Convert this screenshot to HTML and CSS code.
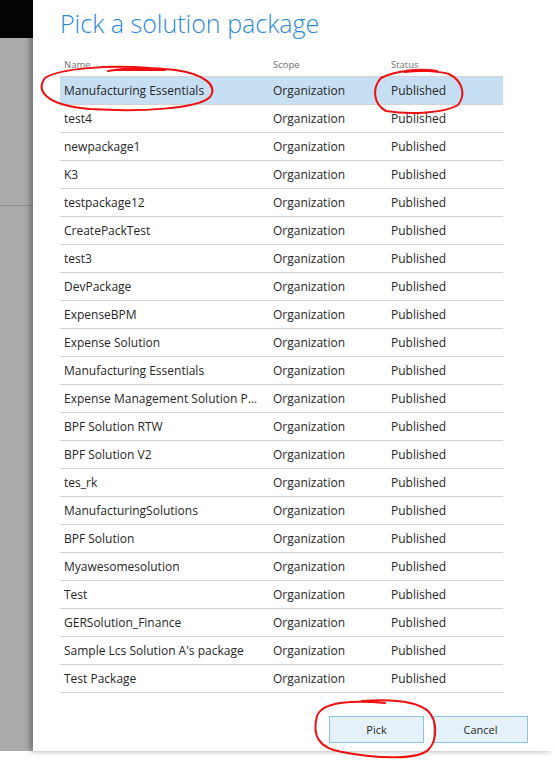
FILE: index.html
```html
<!DOCTYPE html>
<html>
<head>
<meta charset="utf-8">
<link rel="stylesheet" href="styles.css">
</head>
<body>
<div class="page">
  <div class="backdrop">
    <div class="backdrop-top"></div>
    <div class="backdrop-upper"></div>
    <div class="backdrop-lower"></div>
  </div>
  <div class="dialog">
    <h1 class="title">Pick a solution package</h1>
    <div class="table">
      <div class="row head"><div class="cell">Name</div><div class="cell">Scope</div><div class="cell">Status</div></div>
      <div class="row selected"><div class="cell">Manufacturing Essentials</div><div class="cell">Organization</div><div class="cell">Published</div></div>
      <div class="row"><div class="cell">test4</div><div class="cell">Organization</div><div class="cell">Published</div></div>
      <div class="row"><div class="cell">newpackage1</div><div class="cell">Organization</div><div class="cell">Published</div></div>
      <div class="row"><div class="cell">K3</div><div class="cell">Organization</div><div class="cell">Published</div></div>
      <div class="row"><div class="cell">testpackage12</div><div class="cell">Organization</div><div class="cell">Published</div></div>
      <div class="row"><div class="cell">CreatePackTest</div><div class="cell">Organization</div><div class="cell">Published</div></div>
      <div class="row"><div class="cell">test3</div><div class="cell">Organization</div><div class="cell">Published</div></div>
      <div class="row"><div class="cell">DevPackage</div><div class="cell">Organization</div><div class="cell">Published</div></div>
      <div class="row"><div class="cell">ExpenseBPM</div><div class="cell">Organization</div><div class="cell">Published</div></div>
      <div class="row"><div class="cell">Expense Solution</div><div class="cell">Organization</div><div class="cell">Published</div></div>
      <div class="row"><div class="cell">Manufacturing Essentials</div><div class="cell">Organization</div><div class="cell">Published</div></div>
      <div class="row"><div class="cell">Expense Management Solution Package</div><div class="cell">Organization</div><div class="cell">Published</div></div>
      <div class="row"><div class="cell">BPF Solution RTW</div><div class="cell">Organization</div><div class="cell">Published</div></div>
      <div class="row"><div class="cell">BPF Solution V2</div><div class="cell">Organization</div><div class="cell">Published</div></div>
      <div class="row"><div class="cell">tes_rk</div><div class="cell">Organization</div><div class="cell">Published</div></div>
      <div class="row"><div class="cell">ManufacturingSolutions</div><div class="cell">Organization</div><div class="cell">Published</div></div>
      <div class="row"><div class="cell">BPF Solution</div><div class="cell">Organization</div><div class="cell">Published</div></div>
      <div class="row"><div class="cell">Myawesomesolution</div><div class="cell">Organization</div><div class="cell">Published</div></div>
      <div class="row"><div class="cell">Test</div><div class="cell">Organization</div><div class="cell">Published</div></div>
      <div class="row"><div class="cell">GERSolution_Finance</div><div class="cell">Organization</div><div class="cell">Published</div></div>
      <div class="row"><div class="cell">Sample Lcs Solution A's package</div><div class="cell">Organization</div><div class="cell">Published</div></div>
      <div class="row"><div class="cell">Test Package</div><div class="cell">Organization</div><div class="cell">Published</div></div>
    </div>
    <div class="actions">
      <button class="btn">Pick</button>
      <button class="btn">Cancel</button>
    </div>
  </div>
  <svg class="marks" width="553" height="760" viewBox="0 0 553 760">
    <path d="M115 70 L165 70 M150 68 C110 65 60 68 45 78 C36 90 44 105 90 109 C140 112 198 109 210 97 C218 86 205 74 175 70 C150 67 125 68 108 71"/>
    <path d="M437 71 C418 68 395 71 381 78 C372 88 373 104 386 111 C410 115 445 113 458 105 C466 95 463 81 449 74 C438 71 420 70 405 72"/>
    <path d="M385 703 C352 700 322 702 317 716 C312 735 318 748 342 752 C378 759 420 760 429 749 C438 739 437 720 428 711 C415 700 390 699 362 701"/>
  </svg>
</div>
</body>
</html>
```
FILE: styles.css
```css
html, body {
  margin: 0;
  padding: 0;
  background: #ffffff;
}
.page {
  position: relative;
  width: 553px;
  height: 760px;
  display: flex;
  align-items: flex-start;
  overflow: hidden;
  font-family: "Open Sans", "Noto Sans", sans-serif;
}
.backdrop {
  width: 33px;
  height: 751px;
  display: flex;
  flex-direction: column;
  flex-shrink: 0;
}
.backdrop-top {
  height: 38px;
  background: #050505;
}
.backdrop-upper {
  height: 167px;
  background: #ababab;
  border-bottom: 1px solid #8f8f8f;
}
.backdrop-lower {
  flex: 1;
  background: #ababab;
}
.dialog {
  width: 493px;
  height: 751px;
  background: #ffffff;
  padding: 0 0 0 27px;
  box-shadow: -3px 0 6px rgba(0, 0, 0, 0.35);
  position: relative;
  z-index: 1;
  display: flex;
  flex-direction: column;
}
.title {
  margin: 6px 0 0 0;
  font-weight: 300;
  font-size: 25px;
  line-height: 34px;
  color: #2b8ad8;
  height: 40px;
}
.table {
  width: 443px;
  display: flex;
  flex-direction: column;
}
.row {
  display: grid;
  grid-template-columns: 209px 118px 116px;
  height: 27px;
  border-bottom: 1px solid #d2d2d2;
  align-items: center;
  font-size: 12px;
  color: #262626;
}
.row.head {
  height: 30px;
  font-size: 9.5px;
  color: #707070;
  align-items: end;
  border-bottom-color: #d2d2d2;
}
.row.head .cell {
  padding-bottom: 5px;
}
.row.selected {
  background: #c7dff3;
}
.cell {
  padding: 0 6px 0 4px;
  white-space: nowrap;
  overflow: hidden;
  text-overflow: ellipsis;
}
.actions {
  display: flex;
  justify-content: flex-end;
  gap: 9px;
  margin-top: 23px;
  padding-right: 25px;
}
.btn {
  width: 95px;
  height: 27px;
  background: #e5f1fb;
  border: 1px solid #8ebfe8;
  font-family: "Open Sans", "Noto Sans", sans-serif;
  font-size: 11px;
  color: #262626;
  padding: 0;
}
.marks {
  position: absolute;
  left: 0;
  top: 0;
  z-index: 2;
  pointer-events: none;
}
.marks path {
  fill: none;
  stroke: #ee1010;
  stroke-width: 2;
  stroke-linecap: round;
  stroke-linejoin: round;
}
```
